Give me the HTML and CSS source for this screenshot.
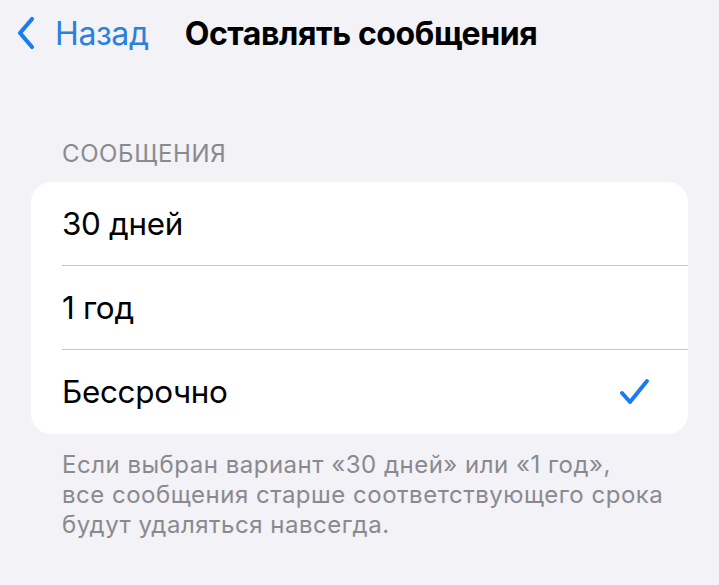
FILE: index.html
```html
<!DOCTYPE html>
<html lang="ru">
<head>
<meta charset="utf-8">
<title>Оставлять сообщения</title>
<link rel="stylesheet" href="styles.css">
</head>
<body>
<header class="nav">
  <a class="back">
    <svg class="chev" width="20" height="34" viewBox="0 0 20 34" aria-hidden="true">
      <path d="M16 3 L4 17 L16 31" fill="none" stroke="#1a7cf0" stroke-width="4.2" stroke-linecap="round" stroke-linejoin="round"/>
    </svg>
    <span class="back-label">Назад</span>
  </a>
  <h1 class="title">Оставлять сообщения</h1>
</header>
<main class="content">
  <div class="section-header">СООБЩЕНИЯ</div>
  <div class="card">
    <div class="row"><span class="row-label">30 дней</span></div>
    <div class="row"><span class="row-label">1 год</span></div>
    <div class="row"><span class="row-label">Бессрочно</span>
      <svg class="check" width="34" height="30" viewBox="0 0 34 30" aria-hidden="true">
        <path d="M4 16 L12 25 L29 4" fill="none" stroke="#1a7cf0" stroke-width="4" stroke-linecap="round" stroke-linejoin="round"/>
      </svg>
    </div>
  </div>
  <p class="footer">Если выбран вариант «30 дней» или «1 год»,<br>все сообщения старше соответствующего срока будут удаляться навсегда.</p>
</main>
</body>
</html>
```
FILE: styles.css
```css
html, body {
  margin: 0;
  padding: 0;
}
body {
  background: #f2f2f7;
  font-family: Inter, "Noto Sans", "Liberation Sans", sans-serif;
  color: #000;
  width: 719px;
  height: 585px;
  overflow: hidden;
}
.nav {
  display: flex;
  align-items: center;
  height: 66px;
  padding-left: 16px;
}
.back {
  display: flex;
  align-items: center;
  color: #2a7fe0;
  text-decoration: none;
}
.chev {
  display: block;
}
.back-label {
  margin-left: 19px;
  font-size: 32px;
  letter-spacing: -0.4px;
}
.title {
  margin: 0 0 0 36px;
  font-size: 32px;
  font-weight: 700;
  letter-spacing: -0.4px;
}
.content {
  padding: 0 31px;
}
.section-header {
  margin-top: 74px;
  padding-left: 31px;
  font-size: 24px;
  color: #8a8a8e;
  letter-spacing: 0.6px;
  line-height: 28px;
}
.card {
  margin-top: 14px;
  background: #fff;
  border-radius: 20px;
  overflow: hidden;
}
.row {
  display: flex;
  align-items: center;
  justify-content: space-between;
  height: 84px;
  margin-left: 31px;
  padding-right: 36px;
  box-sizing: border-box;
  border-bottom: 1px solid #c6c6c8;
}
.row:last-child {
  border-bottom: none;
}
.row-label {
  font-size: 31.4px;
  letter-spacing: -0.3px;
}
.check {
  display: block;
}
.footer {
  margin: 16px 0 0;
  padding-left: 31px;
  padding-right: 0;
  font-size: 24px;
  letter-spacing: 0.5px;
  line-height: 30px;
  color: #8a8a8e;
}
```
